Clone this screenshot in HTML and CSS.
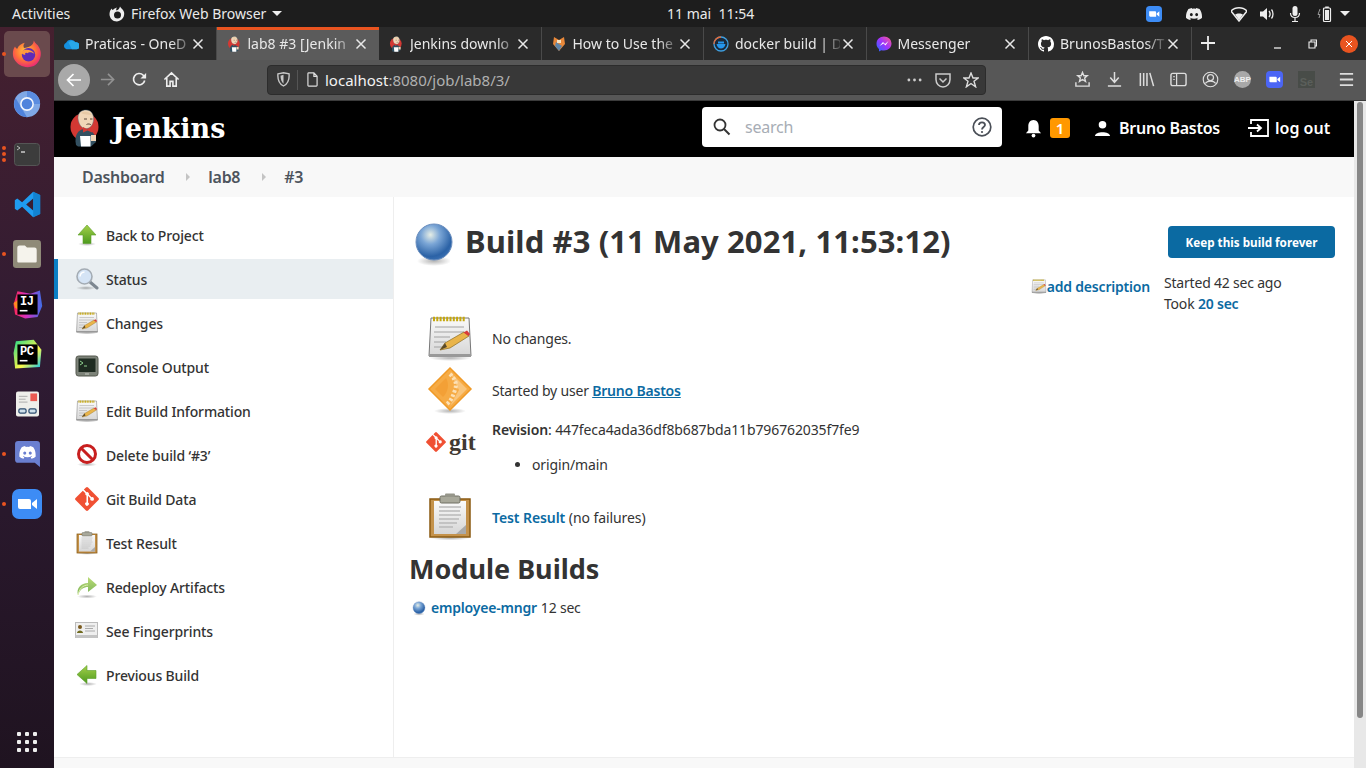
FILE: index.html
```html
<!DOCTYPE html>
<html lang="en">
  <head>
    <meta charset="UTF-8" />
    <title>lab8 #3 [Jenkins]</title>
    <link rel="stylesheet" href="styles.css">
  </head>
  <body>
    <svg class="sprite" aria-hidden="true">
      <defs>
        <radialGradient id="ballFill" cx="40%" cy="30%" r="75%">
          <stop offset="0" stop-color="#e6eee6" />
          <stop offset="0.35" stop-color="#7ba6d6" />
          <stop offset="0.8" stop-color="#2b62a6" />
          <stop offset="1" stop-color="#3c72b4" />
        </radialGradient>
        <radialGradient id="shade">
          <stop offset="0" stop-color="#000" stop-opacity="0.3" />
          <stop offset="1" stop-color="#000" stop-opacity="0" />
        </radialGradient>
        <linearGradient id="greenFill" x1="0" y1="0" x2="0" y2="1">
          <stop offset="0" stop-color="#a4d04a" />
          <stop offset="1" stop-color="#4d9a1f" />
        </linearGradient>
        <linearGradient id="paperFill" x1="0" y1="0" x2="0" y2="1">
          <stop offset="0" stop-color="#fafafa" />
          <stop offset="1" stop-color="#d6d6d6" />
        </linearGradient>
        <radialGradient id="foxFill" cx="45%" cy="40%" r="70%">
          <stop offset="0" stop-color="#ffcb3d" />
          <stop offset="0.5" stop-color="#ff7139" />
          <stop offset="1" stop-color="#e31587" />
        </radialGradient>

        <symbol id="i-ball" viewBox="0 0 48 48">
          <ellipse cx="24" cy="42" rx="17" ry="5" fill="url(#shade)" />
          <circle cx="24" cy="23" r="18" fill="url(#ballFill)" stroke="#6c8fbf" />
        </symbol>
        <symbol id="i-up" viewBox="0 0 24 24">
          <ellipse cx="12" cy="21" rx="9" ry="2" fill="url(#shade)" />
          <path d="M12 2 21 12H16V20.500H8V12H3Z" fill="url(#greenFill)" stroke="#5c9e2a" stroke-width=".6" />
        </symbol>
        <symbol id="i-left" viewBox="0 0 24 24">
          <ellipse cx="13" cy="21" rx="9" ry="2" fill="url(#shade)" />
          <path d="M2 11.500 12 2.500V7.500H21V15.500H12V20.500Z" fill="url(#greenFill)" stroke="#5c9e2a" stroke-width=".6" />
        </symbol>
        <symbol id="i-search" viewBox="0 0 24 24">
          <ellipse cx="11" cy="21" rx="10" ry="2" fill="url(#shade)" />
          <path d="M15 15 22 21" stroke="#7d8790" stroke-width="3" stroke-linecap="round" />
          <circle cx="9.500" cy="9.500" r="7.500" fill="#d5e4f5" stroke="#a4acb4" stroke-width="1.600" />
          <path d="M5 9.500A5 5 0 0 1 9.500 5" fill="none" stroke="#fff" stroke-width="1.500" />
        </symbol>
        <symbol id="i-notepad" viewBox="0 0 48 48">
          <ellipse cx="24" cy="44" rx="21" ry="3" fill="url(#shade)" />
          <path d="M5 4H43L45 42H3Z" fill="url(#paperFill)" stroke="#777" />
          <path d="M3 40H45V43H3Z" fill="#999" />
          <path d="M7 5H40" stroke="#c5a70e" stroke-width="4.500" stroke-dasharray="2 1.300" />
          <path d="M9 13H38M8 18H38M8 23H24M8 28H20M8 33H16" stroke="#a2a2a2" />
          <path d="M14 36 19 29 38 18 43 22 24 34Z" fill="#e9b44a" stroke="#8a6b23" stroke-width=".7" />
          <path d="M14 36 19 29 21 33Z" fill="#5a4a2b" />
          <path d="M37.500 18.500 41 16.500 44 20 42.500 22Z" fill="#d83a3a" />
        </symbol>
        <symbol id="i-terminal" viewBox="0 0 24 24">
          <rect x="1" y="1" width="22" height="20" rx="2.500" fill="#7d8379" stroke="#55594f" />
          <rect x="3.500" y="3.500" width="17" height="13.500" fill="#1e2b21" />
          <path d="M5 6 8 8 5 10M9 11H12" fill="none" stroke="#8fd18f" />
          <path d="M10 19H14" stroke="#c8cbc4" />
        </symbol>
        <symbol id="i-stop" viewBox="0 0 24 24">
          <ellipse cx="12" cy="21.500" rx="10" ry="2" fill="url(#shade)" />
          <circle cx="12" cy="11" r="8.500" fill="#fff" stroke="#c81f1f" stroke-width="3" />
          <path d="M6 5 18 17" stroke="#c81f1f" stroke-width="3" />
        </symbol>
        <symbol id="i-git" viewBox="0 0 92 92">
          <path d="M90 42 50 2A6 6 0 0 0 42 2L34 10 44 20A7 7 0 0 1 53 29L63 39A7 7 0 1 1 59 43L50 34V59A7 7 0 1 1 44 58V33A7 7 0 0 1 40 24L30 14 2 42A6 6 0 0 0 2 50L42 90A6 6 0 0 0 50 90L90 50A6 6 0 0 0 90 42Z" fill="#f05033" />
        </symbol>
        <symbol id="i-clipboard" viewBox="0 0 48 48">
          <ellipse cx="24" cy="45" rx="20" ry="2.500" fill="url(#shade)" />
          <rect x="4" y="6" width="40" height="38" fill="#c4924b" stroke="#8a5a12" stroke-width="1.500" />
          <rect x="8" y="8" width="32" height="33" fill="url(#paperFill)" />
          <path d="M13 14H35M13 18H34M13 22H35M13 26H33M13 30H31M13 34H27" stroke="#b9b9b9" stroke-width="1.300" />
          <path d="M40 41V32L30 41Z" fill="#aaa" />
          <rect x="14" y="3" width="20" height="7" rx="1.500" fill="#a8a89a" stroke="#6f6f62" />
          <rect x="19" y="0.500" width="10" height="3.500" rx="1" fill="#96968a" />
        </symbol>
        <symbol id="i-redeploy" viewBox="0 0 24 24">
          <ellipse cx="12" cy="21.500" rx="10" ry="2" fill="url(#shade)" />
          <path d="M3 20C1 13 6 8 13 8V2L22 10 13 17V12C9 12 5 14 3 20Z" fill="url(#greenFill)" opacity=".75" />
          <path d="M3 20C4 14 8 10 13 10" stroke="#e2efb2" fill="none" />
        </symbol>
        <symbol id="i-card" viewBox="0 0 24 24">
          <rect x="0.500" y="3.500" width="22" height="15" fill="#efefef" stroke="#bbb" />
          <rect x="0.500" y="16" width="22" height="3" fill="#c4c4c4" />
          <circle cx="5" cy="8" r="2" fill="#7a5a1e" />
          <path d="M2 14C2 10.500 8 10.500 8 14Z" fill="#6f6a1e" />
          <path d="M10 7H20M10 9.500H18M10 12H20" stroke="#aaa" />
        </symbol>
        <symbol id="i-user" viewBox="0 0 48 48">
          <ellipse cx="24" cy="45" rx="16" ry="3" fill="url(#shade)" />
          <path d="M24 2 45 23 24 44 3 23Z" fill="#f6ab45" stroke="#f09a26" stroke-width="1.500" />
          <path d="M24 6 41 23 24 40 33 24Z" fill="#f9c57c" />
          <path d="M24 8C30 14 31 18 29 24 27 30 25 35 21 38" fill="none" stroke="#fce0b5" stroke-width="4" stroke-dasharray="2.500 2" />
          <path d="M9 23 20 12C23 17 23 25 17 31Z" fill="#f3a036" />
        </symbol>
        <symbol id="i-jenkins" viewBox="0 0 30 38">
          <circle cx="14.500" cy="18" r="14" fill="#d33833" />
          <path d="M6 36C4 26 8 21 14 20 21 20 26 25 26 33L21 37.500H8Z" fill="#335061" />
          <path d="M8 9C8 3 12 1 16 1 21 1 24 5 23.500 11 23 16 20 20 15.500 19.500 11 19 8.500 15 8 9Z" fill="#f0d6b7" stroke="#49728b" stroke-width=".4" />
          <path d="M11 4C14 2 19 2.500 22 6 18 5.500 14 6 11 4Z" fill="#e7c9a5" />
          <path d="M14 10H17M20 10H22.500M16.500 15.500C18 14.500 20.500 15 21 16" stroke="#49382c" stroke-width=".9" fill="none" />
          <path d="M13 18 17.500 20.500 22 18 22 23.500 17.500 21.500 13 23.500Z" fill="#d33833" />
          <path d="M10 27H20.500V37.500H11Z" fill="#fff" />
          <rect x="21" y="26" width="5" height="6" fill="#f0d6b7" />
        </symbol>
        <symbol id="i-firefox" viewBox="0 0 40 40">
          <path d="M29 2C31 6 34 7 36 11 41 19 38 31 29 36 19 40 8 36 3 27 0 21 1 14 4 10 5 12 6 13 7 13 9 8 13 6 17 5 15 8 15 10 16 12 22 11 29 9 29 2Z" fill="url(#foxFill)" />
          <circle cx="22" cy="21" r="9" fill="#5e2bb8" />
          <path d="M13 16C18 13 27 14 30 20 27 17 22 17 21 19 19 17 16 19 18 21 14 21 12 19 13 16Z" fill="#ff9a3d" />
        </symbol>
        <symbol id="i-code" viewBox="0 0 100 100">
          <path d="M71 3 97 15V85L71 97 30 58 12 72 3 66V34L12 28 30 42ZM71 28 45 50 71 72Z" fill="#1f9cf0" fill-rule="evenodd" />
          <path d="M71 3 97 15V85L71 97Z" fill="#0f7cc8" opacity=".8" />
        </symbol>
        <symbol id="i-discord" viewBox="0 0 24 24">
          <path d="M20.317 4.37a19.79 19.79 0 0 0-4.885-1.515.074.074 0 0 0-.079.037c-.21.375-.444.864-.608 1.25a18.27 18.27 0 0 0-5.487 0 12.64 12.64 0 0 0-.617-1.25.077.077 0 0 0-.079-.037A19.74 19.74 0 0 0 3.677 4.37a.07.07 0 0 0-.032.027C.533 9.046-.32 13.58.099 18.057a.082.082 0 0 0 .031.057 19.9 19.9 0 0 0 5.993 3.03.078.078 0 0 0 .084-.028c.462-.63.874-1.295 1.226-1.994a.076.076 0 0 0-.041-.106 13.1 13.1 0 0 1-1.872-.892.077.077 0 0 1-.008-.128c.126-.094.252-.192.372-.292a.074.074 0 0 1 .077-.01c3.928 1.793 8.18 1.793 12.062 0a.074.074 0 0 1 .078.01c.12.098.246.198.373.292a.077.077 0 0 1-.006.127 12.3 12.3 0 0 1-1.873.892.077.077 0 0 0-.041.107c.36.698.772 1.362 1.225 1.993a.076.076 0 0 0 .084.028 19.84 19.84 0 0 0 6.002-3.03.077.077 0 0 0 .032-.054c.5-5.177-.838-9.674-3.549-13.66a.061.061 0 0 0-.031-.03zM8.02 15.33c-1.183 0-2.157-1.085-2.157-2.419 0-1.333.956-2.419 2.157-2.419 1.21 0 2.176 1.096 2.157 2.42 0 1.333-.956 2.418-2.157 2.418zm7.975 0c-1.183 0-2.157-1.085-2.157-2.419 0-1.333.955-2.419 2.157-2.419 1.21 0 2.176 1.096 2.157 2.42 0 1.333-.946 2.418-2.157 2.418z" fill="currentColor" />
        </symbol>
        <symbol id="i-zoom" viewBox="0 0 30 30">
          <rect width="30" height="30" rx="7" fill="currentColor" />
          <path d="M6 10H17A2 2 0 0 1 19 12V20H8A2 2 0 0 1 6 18ZM20 14 25 10V20L20 16Z" fill="#fff" />
        </symbol>
        <symbol id="i-x" viewBox="0 0 12 12">
          <path d="M1.500 1.500 10.500 10.500M10.500 1.500 1.500 10.500" stroke="currentColor" stroke-width="1.500" />
        </symbol>
        <symbol id="i-github" viewBox="0 0 16 16">
          <path d="M8 0C3.58 0 0 3.58 0 8c0 3.54 2.29 6.53 5.47 7.59.4.07.55-.17.55-.38 0-.19-.01-.82-.01-1.49-2.01.37-2.53-.49-2.69-.94-.09-.23-.48-.94-.82-1.13-.28-.15-.68-.52-.01-.53.63-.01 1.08.58 1.23.82.72 1.21 1.87.87 2.33.66.07-.52.28-.87.51-1.07-1.78-.2-3.64-.89-3.64-3.95 0-.87.31-1.59.82-2.15-.08-.2-.36-1.02.08-2.12 0 0 .67-.21 2.2.82.64-.18 1.32-.27 2-.27.68 0 1.36.09 2 .27 1.53-1.04 2.2-.82 2.2-.82.44 1.1.16 1.92.08 2.12.51.56.82 1.27.82 2.15 0 3.07-1.87 3.75-3.65 3.95.29.25.54.73.54 1.48 0 1.07-.01 1.93-.01 2.2 0 .21.15.46.55.38A8.013 8.013 0 0016 8c0-4.42-3.58-8-8-8z" fill="#fff" />
        </symbol>
      </defs>
    </svg>

    <div class="topbar">
      <span class="activities">Activities</span>
      <span class="app-menu">
        <svg class="app-icon" viewBox="0 0 16 16">
          <path d="M11 0.500C11.500 2 14 3 15 6 16 10 13.500 15 8 15.500 3.500 15.500 .5 12 .5 8 .5 5 2 3 3 2.500 3 3.500 3.500 4 4 4 5 2.500 6.500 2 8 1.500 7 3 7 4 7.500 4.500 9 4 10.500 3 11 .5Z" fill="#eee" />
          <circle cx="8.500" cy="9" r="3.500" fill="#1d1d1d" />
        </svg>
        Firefox Web Browser
        <i class="caret"></i>
      </span>
      <span class="clock">11 mai&nbsp; 11:54</span>
      <span class="tray">
        <svg class="tray-zoom" viewBox="0 0 30 30"><use href="#i-zoom" /></svg>
        <svg class="tray-discord" viewBox="0 0 24 24"><use href="#i-discord" /></svg>
        <svg class="tray-icon tray-wifi" viewBox="0 0 16 16"><path d="M0 5C4 .5 12 .5 16 5L8 15Z" fill="none" stroke="#eee" stroke-width="1.500" /><path d="M4 8.500C6 7 10 7 12 8.500L8 14Z" fill="#eee" /></svg>
        <svg class="tray-icon tray-volume" viewBox="0 0 16 16"><path d="M1 5.500H4L8 2V14L4 10.500H1Z" fill="#eee" /><path d="M10 5C11.500 7 11.500 9 10 11M12.500 3.500C14.500 6 14.500 10 12.500 12.500" fill="none" stroke="#eee" stroke-width="1.300" /></svg>
        <svg class="tray-icon tray-mic" viewBox="0 0 16 16"><rect x="5.500" y="0" width="5" height="10" rx="2.500" fill="#eee" /><path d="M3.500 7C3.500 13 12.500 13 12.500 7M8 12V15.500M5 15.500H11" fill="none" stroke="#eee" stroke-width="1.200" /></svg>
        <svg class="tray-icon tray-battery" viewBox="0 0 16 16"><path d="M3 3 1 8.500H3L2 12" fill="none" stroke="#999" /><rect x="6.500" y="2" width="7" height="13.500" rx="1" fill="none" stroke="#eee" stroke-width="1.200" /><rect x="8.200" y="0.500" width="3.600" height="1.500" fill="#eee" /><rect x="8" y="4" width="4" height="10" fill="#eee" /></svg>
        <i class="caret"></i>
      </span>
    </div>

    <div class="desktop">
      <nav class="dock">
        <div class="dock-item dock-active"><i class="dots dots-one"></i><svg class="dock-icon" viewBox="0 0 40 40"><use href="#i-firefox" /></svg></div>
        <div class="dock-item">
          <svg class="dock-icon" viewBox="0 0 32 32"><circle cx="16" cy="16" r="15" fill="#7fa8e6" /><path d="M16 1A15 15 0 0 1 31 16L24 16 16 8Z" fill="#5b8de0" /><path d="M3 9 16 31A15 15 0 0 1 3 9Z" fill="#4f83dc" /><circle cx="16" cy="16" r="7" fill="#4f83dc" stroke="#f2f6fd" stroke-width="1.800" /></svg>
        </div>
        <div class="dock-item dock-term">
          <i class="dots dots-three"></i>
          <svg class="dock-icon" viewBox="0 0 26 23"><rect x=".5" y=".5" width="25" height="22" rx="3" fill="#3c3c3c" stroke="#555" /><path d="M3 3 6 5 3 7" fill="none" stroke="#bbb" /><path d="M7 9H11" stroke="#eee" stroke-width="1.200" /></svg>
        </div>
        <div class="dock-item dock-code">
          <svg class="dock-icon" viewBox="0 0 100 100"><use href="#i-code" /></svg>
        </div>
        <div class="dock-item dock-files">
          <i class="dots dots-one"></i>
          <svg class="dock-icon" viewBox="0 0 26 26"><rect width="26" height="26" rx="3" fill="#8f8a78" /><path d="M4 7A2 2 0 0 1 6 5H11L13 7H20A2 2 0 0 1 22 9V20A1 1 0 0 1 21 21H5A1 1 0 0 1 4 20Z" fill="#f5f3ec" /></svg>
        </div>
        <div class="dock-item dock-ij">
          <svg class="dock-icon dock-jb" viewBox="0 0 40 40"><defs><linearGradient id="ijFill" x1="0" y1="0" x2="1" y2="0"><stop offset="0" stop-color="#fe2857" /><stop offset="0.45" stop-color="#d531c0" /><stop offset="1" stop-color="#3d6ee8" /></linearGradient></defs><path d="M7 3 24 6 36 2 39 22 33 36 17 38 4 33 2 20Z" fill="url(#ijFill)" /><path d="M2 18 8 14 8 27 4 24Z" fill="#ff8a1f" /><rect x="7" y="7" width="26" height="26" fill="#000" /><rect x="10" y="27" width="10" height="2" fill="#fff" /></svg>
          <span class="jb-label">IJ</span>
        </div>
        <div class="dock-item dock-pc">
          <svg class="dock-icon dock-jb" viewBox="0 0 40 40"><defs><linearGradient id="pcFill" x1="0" y1="0" x2="1" y2="1"><stop offset="0" stop-color="#21d789" /><stop offset="0.6" stop-color="#fcf84a" /><stop offset="1" stop-color="#07c3f2" /></linearGradient></defs><path d="M5 3 28 1 38 14 36 36 4 38 2 18Z" fill="url(#pcFill)" /><rect x="7" y="7" width="26" height="26" fill="#000" /><rect x="10" y="27" width="10" height="2" fill="#fff" /></svg>
          <span class="jb-label">PC</span>
        </div>
        <div class="dock-item dock-reader">
          <svg class="dock-icon" viewBox="0 0 24 26"><rect width="24" height="26" rx="2" fill="#eeeeea" /><path d="M3 5H12M3 8H10M3 11H12" stroke="#aaa" /><rect x="15" y="2" width="7" height="8" fill="#ea5a52" /><rect x="3" y="18" width="7.500" height="4.500" rx="1.500" fill="#cfe0ea" stroke="#2c4c6e" stroke-width="1.300" /><rect x="13.500" y="18" width="7.500" height="4.500" rx="1.500" fill="#cfe0ea" stroke="#2c4c6e" stroke-width="1.300" /></svg>
        </div>
        <div class="dock-item dock-chat">
          <i class="dots dots-one"></i>
          <svg class="dock-icon" viewBox="0 0 24 26"><path d="M3 0H21A3 3 0 0 1 24 3V25L19 21H3A3 3 0 0 1 0 18V3A3 3 0 0 1 3 0Z" fill="#6a7fd0" /><svg x="4" y="3" width="16" height="16" viewBox="0 0 24 24" color="#fff"><use href="#i-discord" /></svg></svg>
        </div>
        <div class="dock-item dock-meet">
          <i class="dots dots-one"></i>
          <svg class="dock-icon" viewBox="0 0 30 30"><use href="#i-zoom" /></svg>
        </div>
        <div class="dock-grid">
          <i></i><i></i><i></i><i></i><i></i><i></i><i></i><i></i><i></i>
        </div>
      </nav>

      <div class="browser">
        <div class="tabs">
          <div class="tab">
            <svg class="favicon" viewBox="0 0 18 12"><path d="M4 12A4 4 0 0 1 3.500 4.500 6 6 0 0 1 14 4 4 4 0 0 1 15 12Z" fill="#1490df" /><path d="M6 4A6 6 0 0 1 14 4 4 4 0 0 1 15 12H10Z" fill="#28a8ea" /></svg>
            <span class="tab-title">Praticas - OneD</span>
            <svg class="tab-close" viewBox="0 0 12 12"><use href="#i-x" /></svg>
          </div>
          <div class="tab tab-active">
            <svg class="favicon" viewBox="0 0 30 38"><use href="#i-jenkins" /></svg>
            <span class="tab-title">lab8 #3 [Jenkin</span>
            <svg class="tab-close" viewBox="0 0 12 12"><use href="#i-x" /></svg>
          </div>
          <div class="tab">
            <svg class="favicon" viewBox="0 0 30 38"><use href="#i-jenkins" /></svg>
            <span class="tab-title">Jenkins downlo</span>
            <svg class="tab-close" viewBox="0 0 12 12"><use href="#i-x" /></svg>
          </div>
          <div class="tab">
            <svg class="favicon" viewBox="0 0 16 16"><path d="M3 1 8 4 13 1 14 8 8 15 2 8Z" fill="#e8883a" /><path d="M5 6 11 10 8 15 4 10Z" fill="#5f86a8" /><path d="M6 4H10V7H6Z" fill="#f6e3c5" /></svg>
            <span class="tab-title">How to Use the</span>
            <svg class="tab-close" viewBox="0 0 12 12"><use href="#i-x" /></svg>
          </div>
          <div class="tab">
            <svg class="favicon" viewBox="0 0 16 16"><circle cx="8" cy="8" r="7" fill="#1b2a3a" stroke="#3f9fe0" stroke-width="1.300" /><path d="M1 8A7 7 0 0 1 8 1" fill="none" stroke="#e96a35" stroke-width="1.300" /><path d="M3.500 8H12.500C12 11 10 12.500 8 12.500 5.500 12.500 4 10.500 3.500 8ZM5 5.500H11V7.500H5Z" fill="#2496ed" /></svg>
            <span class="tab-title">docker build | D</span>
            <svg class="tab-close" viewBox="0 0 12 12"><use href="#i-x" /></svg>
          </div>
          <div class="tab">
            <svg class="favicon" viewBox="0 0 16 16"><defs><linearGradient id="msgFill" x1="0" y1="1" x2="1" y2="0"><stop offset="0" stop-color="#1e6cff" /><stop offset="0.5" stop-color="#a033ff" /><stop offset="1" stop-color="#ff5c87" /></linearGradient></defs><path d="M8 .5C3.800 .5 .5 3.600 .5 7.700 .5 10 1.500 11.800 3 13V15.500L5.300 14.200C6.100 14.400 7 14.600 8 14.600 12.200 14.600 15.500 11.600 15.500 7.600 15.500 3.600 12.200 .5 8 .5Z" fill="url(#msgFill)" /><path d="M3.500 10 7 6 9 8 12.500 5 9.500 9.500 7.500 7.500Z" fill="#fff" /></svg>
            <span class="tab-title">Messenger</span>
            <svg class="tab-close" viewBox="0 0 12 12"><use href="#i-x" /></svg>
          </div>
          <div class="tab">
            <svg class="favicon" viewBox="0 0 16 16"><use href="#i-github" /></svg>
            <span class="tab-title">BrunosBastos/T</span>
            <svg class="tab-close" viewBox="0 0 12 12"><use href="#i-x" /></svg>
          </div>
          <svg class="new-tab" viewBox="0 0 14 14"><path d="M7 0V14M0 7H14" stroke="#eee" stroke-width="1.800" /></svg>
          <div class="window-controls">
            <svg class="win-btn" viewBox="0 0 10 10"><path d="M1 9H8" stroke="#eee" stroke-width="1.300" /></svg>
            <svg class="win-btn" viewBox="0 0 10 10"><path d="M2 3H8V9H2ZM4 3V1H9.500V7H8" fill="none" stroke="#eee" stroke-width="1.100" /></svg>
            <span class="win-close"><svg viewBox="0 0 12 12"><use href="#i-x" /></svg></span>
          </div>
        </div>

        <div class="toolbar">
          <span class="back-btn"><svg viewBox="0 0 18 18"><path d="M16 9H2.500M8.500 3 2.500 9 8.500 15" fill="none" stroke="#fff" stroke-width="1.700" /></svg></span>
          <svg class="tool-icon tool-forward" viewBox="0 0 18 18"><path d="M2 9H15.500M9.500 3 15.500 9 9.500 15" fill="none" stroke="#929292" stroke-width="1.700" /></svg>
          <svg class="tool-icon tool-reload" viewBox="0 0 18 18"><path d="M14.500 10A6 6 0 1 1 13 4.500L15 7" fill="none" stroke="#eee" stroke-width="1.800" /><path d="M16 2V8H10Z" fill="#eee" /></svg>
          <svg class="tool-icon tool-home" viewBox="0 0 18 18"><path d="M1.500 9 9 2 16.500 9M4 7.500V16H7.500V11H10.500V16H14V7.500" fill="none" stroke="#eee" stroke-width="1.700" /></svg>
          <div class="urlbar">
            <svg class="url-shield" viewBox="0 0 14 16"><path d="M1 2 7 .8 13 2C13.500 8 11 13 7 15 3 13 .5 8 1 2Z" fill="none" stroke="#c8c8c8" stroke-width="1.500" /><path d="M7 3V12.500C5 11 3.800 8 3.800 4Z" fill="#c8c8c8" /></svg>
            <i class="url-sep"></i>
            <svg class="url-page" viewBox="0 0 12 16"><path d="M1 1.500A.8 .8 0 0 1 1.800 .8H7.500L11 4.500V14.500A.8 .8 0 0 1 10.200 15.200H1.800A.8 .8 0 0 1 1 14.500ZM7.500 .8V4.500H11" fill="none" stroke="#ddd" stroke-width="1.300" /></svg>
            <span class="url-text"><b>localhost</b>:8080/job/lab8/3/</span>
            <svg class="url-more" viewBox="0 0 16 4"><circle cx="2" cy="2" r="1.500" /><circle cx="8" cy="2" r="1.500" /><circle cx="14" cy="2" r="1.500" /></svg>
            <svg class="url-action" viewBox="0 0 16 16"><path d="M1 2H15V7.500C15 11.500 12 15 8 15S1 11.500 1 7.500ZM4.500 6.500 8 10 11.500 6.500" fill="none" stroke="#ccc" stroke-width="1.500" /></svg>
            <svg class="url-action" viewBox="0 0 16 16"><path d="M8 1 10 6H15.300L11 9.300 12.600 14.800 8 11.500 3.400 14.800 5 9.300 .7 6H6Z" fill="none" stroke="#ddd" stroke-width="1.400" /></svg>
          </div>
          <div class="tool-group">
            <svg class="tool-icon" viewBox="0 0 18 18"><path d="M9 1.500 10.500 5H14L11.300 7.500 12.200 11 9 9 5.800 11 6.700 7.500 4 5H7.500ZM2 12V16H16V12" fill="none" stroke="#ddd" stroke-width="1.500" /></svg>
            <svg class="tool-icon" viewBox="0 0 18 18"><path d="M9 1V11M4.500 7 9 12 13.500 7M2 16H16" fill="none" stroke="#ddd" stroke-width="1.600" /></svg>
            <svg class="tool-icon" viewBox="0 0 18 18"><path d="M2.500 2V16M6 2V16M9.500 2V16M12.500 2 16.500 16" fill="none" stroke="#ddd" stroke-width="1.600" /></svg>
            <svg class="tool-icon" viewBox="0 0 18 18"><rect x="1" y="2.500" width="16" height="13" rx="2" fill="none" stroke="#ddd" stroke-width="1.500" /><path d="M7 2.500V15.500M3.500 6H5M3.500 9H5" stroke="#ddd" stroke-width="1.300" /></svg>
            <svg class="tool-icon" viewBox="0 0 18 18"><circle cx="9" cy="9" r="7.700" fill="none" stroke="#ddd" stroke-width="1.200" /><circle cx="9" cy="7" r="3.200" fill="none" stroke="#ddd" stroke-width="1.300" /><path d="M3.500 13C6 10 12 10 14.500 13" fill="none" stroke="#ddd" stroke-width="1.300" /></svg>
            <span class="abp">ABP</span>
            <svg class="tool-icon" viewBox="0 0 30 30" color="#4b65f5"><use href="#i-zoom" /></svg>
            <span class="selenium">Se</span>
          </div>
          <i class="tool-sep"></i>
          <svg class="tool-icon" viewBox="0 0 18 18"><path d="M2 3H16M2 9H16M2 15H16" stroke="#ddd" stroke-width="2" /></svg>
        </div>

        <div class="viewport">
          <div class="page">
            <header class="jenkins-header">
              <div class="brand">
                <svg class="brand-logo" viewBox="0 0 30 38"><use href="#i-jenkins" /></svg>
                <span class="brand-name">Jenkins</span>
              </div>
              <div class="search-box">
                <svg class="search-glass" viewBox="0 0 18 18"><circle cx="7" cy="7" r="5.500" fill="none" stroke="#333" stroke-width="1.800" /><path d="M11 11 16.500 16.500" stroke="#333" stroke-width="2" /></svg>
                <span class="search-hint">search</span>
                <svg class="search-help" viewBox="0 0 20 20"><circle cx="10" cy="10" r="8.800" fill="none" stroke="#4a4f57" stroke-width="1.700" /><path d="M7 8C7 4.500 13 4.500 13 8 13 10 10 10 10 12.500" fill="none" stroke="#4a4f57" stroke-width="1.800" /><circle cx="10" cy="15" r="1.100" fill="#4a4f57" /></svg>
              </div>
              <div class="notify">
                <svg class="bell" viewBox="0 0 18 20"><path d="M9 1C12.500 1 14.500 4 14.500 7.500V12L17 15H1L3.500 12V7.500C3.500 4 5.500 1 9 1Z" fill="#fff" /><circle cx="9" cy="17.500" r="2" fill="#fff" /></svg>
                <span class="badge">1</span>
              </div>
              <div class="account">
                <svg class="person" viewBox="0 0 18 18"><circle cx="9" cy="5" r="4" fill="#fff" /><path d="M1 17C1 11.500 17 11.500 17 17Z" fill="#fff" /></svg>
                <span>Bruno Bastos</span>
              </div>
              <div class="logout">
                <svg class="logout-icon" viewBox="0 0 22 18"><path d="M4 5V1H21V17H4V13M1 9H14M10 5.500 14 9 10 12.500" fill="none" stroke="#fff" stroke-width="1.800" /></svg>
                <span>log out</span>
              </div>
            </header>

            <div class="breadcrumbs">
              <span>Dashboard</span>
              <i class="crumb-arrow"></i>
              <span>lab8</span>
              <i class="crumb-arrow"></i>
              <span>#3</span>
            </div>

            <div class="layout">
              <aside class="side-panel">
                <a class="task"><svg class="task-icon" viewBox="0 0 24 24"><use href="#i-up" /></svg>Back to Project</a>
                <a class="task task-current"><svg class="task-icon" viewBox="0 0 24 24"><use href="#i-search" /></svg>Status</a>
                <a class="task"><svg class="task-icon" viewBox="0 0 48 48"><use href="#i-notepad" /></svg>Changes</a>
                <a class="task"><svg class="task-icon" viewBox="0 0 24 24"><use href="#i-terminal" /></svg>Console Output</a>
                <a class="task"><svg class="task-icon" viewBox="0 0 48 48"><use href="#i-notepad" /></svg>Edit Build Information</a>
                <a class="task"><svg class="task-icon" viewBox="0 0 24 24"><use href="#i-stop" /></svg>Delete build ‘#3’</a>
                <a class="task"><svg class="task-icon" viewBox="0 0 92 92"><use href="#i-git" /></svg>Git Build Data</a>
                <a class="task"><svg class="task-icon" viewBox="0 0 48 48"><use href="#i-clipboard" /></svg>Test Result</a>
                <a class="task"><svg class="task-icon" viewBox="0 0 24 24"><use href="#i-redeploy" /></svg>Redeploy Artifacts</a>
                <a class="task"><svg class="task-icon" viewBox="0 0 24 24"><use href="#i-card" /></svg>See Fingerprints</a>
                <a class="task"><svg class="task-icon" viewBox="0 0 24 24"><use href="#i-left" /></svg>Previous Build</a>
              </aside>

              <main class="main-panel">
                <div class="build-head">
                  <svg class="build-ball" viewBox="0 0 48 48"><use href="#i-ball" /></svg>
                  <h1>Build #3 (11 May 2021, 11:53:12)</h1>
                  <button class="keep-btn">Keep this build forever</button>
                </div>
                <div class="build-meta">
                  <a class="add-desc"><svg class="add-desc-icon" viewBox="0 0 48 48"><use href="#i-notepad" /></svg>add description</a>
                  <div class="build-times">
                    <div>Started 42 sec ago</div>
                    <div>Took <a class="link">20 sec</a></div>
                  </div>
                </div>
                <div class="summary">
                  <div class="summary-row">
                    <svg class="summary-icon" viewBox="0 0 48 48"><use href="#i-notepad" /></svg>
                    <div>No changes.</div>
                  </div>
                  <div class="summary-row">
                    <svg class="summary-icon" viewBox="0 0 48 48"><use href="#i-user" /></svg>
                    <div>Started by user <a class="link link-user">Bruno Bastos</a></div>
                  </div>
                  <div class="summary-row summary-git">
                    <div class="git-logo"><svg class="git-mark" viewBox="0 0 92 92"><use href="#i-git" /></svg><span>git</span></div>
                    <div class="git-detail">
                      <div><b>Revision</b>: 447feca4ada36df8b687bda11b796762035f7fe9</div>
                      <ul class="branches"><li>origin/main</li></ul>
                    </div>
                  </div>
                  <div class="summary-row summary-test">
                    <svg class="summary-icon" viewBox="0 0 48 48"><use href="#i-clipboard" /></svg>
                    <div><a class="link">Test Result</a> (no failures)</div>
                  </div>
                </div>
                <h2>Module Builds</h2>
                <div class="module">
                  <svg class="module-ball" viewBox="0 0 48 48"><use href="#i-ball" /></svg>
                  <a class="link">employee-mngr</a> 12 sec
                </div>
              </main>
            </div>
            <footer class="page-footer"></footer>
          </div>
          <div class="scrollbar"><i></i></div>
        </div>
      </div>
    </div>
  </body>
</html>
```

FILE: styles.css
```css
* {
  box-sizing: border-box;
}

html,
body {
  margin: 0;
  height: 768px;
  overflow: hidden;
}

body {
  font-family: "Noto Sans", "Open Sans", sans-serif;
  font-size: 14px;
  color: #333;
  background: #000;
}

.sprite {
  display: block;
  width: 0;
  height: 0;
  overflow: hidden;
}

/* ubuntu top bar */
.topbar {
  height: 27px;
  display: flex;
  align-items: center;
  background: #1d1d1d;
  color: #eaeaea;
  font-size: 14px;
  padding-left: 12px;
}

.activities {
  width: 97px;
}

.app-menu {
  width: 558px;
  display: flex;
  align-items: center;
}

.app-icon {
  width: 16px;
  height: 16px;
  margin-right: 6px;
}

.caret {
  display: inline-block;
  width: 0;
  height: 0;
  border-left: 5px solid transparent;
  border-right: 5px solid transparent;
  border-top: 5px solid #eee;
  margin-left: 6px;
}

.clock {
  width: 479px;
}

.tray {
  display: flex;
  align-items: center;
}

.tray-zoom {
  width: 16px;
  height: 18px;
  color: #3d8cf5;
  margin-right: 24px;
}

.tray-discord {
  width: 16px;
  height: 16px;
  color: #eee;
  margin-right: 29px;
}

.tray-icon {
  width: 16px;
  height: 16px;
  margin-right: 12px;
}

.tray-mic {
  margin-right: 14px;
}

.tray-battery {
  margin-right: 1px;
}

.desktop {
  display: flex;
  height: 741px;
}

/* dock */
.dock {
  width: 54px;
  position: relative;
  display: flex;
  flex-direction: column;
  align-items: center;
  background: linear-gradient(#45202f, #2f1b33 45%, #1f1320);
  padding-top: 4px;
}

.dock-item {
  width: 46px;
  height: 46px;
  margin-bottom: 4px;
  display: flex;
  align-items: center;
  justify-content: center;
  position: relative;
  flex-shrink: 0;
}

.dock-active {
  background: #6a4a4d;
  border-radius: 5px;
}

.dock-icon {
  width: 28px;
  height: 28px;
}

.dock-active .dock-icon {
  width: 30px;
  height: 30px;
}

.dock-term .dock-icon {
  width: 26px;
  height: 23px;
}

.dock-code .dock-icon {
  width: 27px;
  height: 27px;
}

.dock-item .dock-jb {
  width: 31px;
  height: 31px;
}

.jb-label {
  position: absolute;
  left: 16px;
  top: 15px;
  color: #fff;
  font: bold 12px/12px "Liberation Mono", monospace;
  letter-spacing: -0.5px;
}

.dock-meet .dock-icon {
  color: #3d8cf5;
  width: 30px;
  height: 30px;
}

.dock-chat .dock-icon {
  width: 25px;
  height: 27px;
}

.dock-reader .dock-icon {
  width: 23px;
  height: 26px;
}

.dots {
  position: absolute;
  left: -2px;
  top: 21px;
  width: 4px;
  height: 4px;
  border-radius: 50%;
  background: #e95420;
}

.dots-three {
  box-shadow: 0 -6px 0 #e95420, 0 6px 0 #e95420;
}

.dock-grid {
  position: absolute;
  left: 17px;
  bottom: 16px;
  width: 20px;
  display: grid;
  grid-template-columns: repeat(3, 4px);
  gap: 4px;
}

.dock-grid i {
  width: 4px;
  height: 4px;
  background: #eee;
  border-radius: 1px;
}

/* firefox */
.browser {
  flex: 1;
  display: flex;
  flex-direction: column;
  min-width: 0;
}

.tabs {
  height: 33px;
  display: flex;
  background: #2a2a2a;
  color: #e8e8e8;
  font-size: 14px;
}

.tab {
  width: 162.500px;
  display: flex;
  align-items: center;
  padding: 0 12px 0 9px;
  border-right: 1px solid #4a4a4a;
  flex-shrink: 0;
}

.tab-active {
  background: #5b5b5b;
  border-top: 3px solid #e95420;
  border-right: 0;
  padding-bottom: 3px;
}

.favicon {
  width: 16px;
  height: 16px;
  margin-right: 6px;
  flex-shrink: 0;
}

.tab-title {
  flex: 1;
  min-width: 0;
  white-space: nowrap;
  -webkit-mask-image: linear-gradient(to right, #000 82%, transparent 104%);
  mask-image: linear-gradient(to right, #000 82%, transparent 104%);
}

.tab-close {
  width: 12px;
  height: 12px;
  margin-left: 2px;
  flex-shrink: 0;
  color: #e8e8e8;
}

.new-tab {
  width: 14px;
  height: 14px;
  margin: 9px 0 0 9px;
}

.window-controls {
  flex: 1;
  display: flex;
  align-items: center;
  justify-content: flex-end;
  padding-right: 8px;
}

.win-btn {
  width: 10px;
  height: 10px;
  margin-right: 24px;
}

.win-close {
  width: 18px;
  height: 18px;
  border-radius: 50%;
  background: #e95420;
  color: #fff;
  display: flex;
  align-items: center;
  justify-content: center;
  margin-left: -1px;
}

.win-close svg {
  width: 8px;
  height: 8px;
}

.toolbar {
  height: 41px;
  background: #575757;
  display: flex;
  align-items: center;
  padding: 0 11px 1px 4px;
  border-bottom: 1px solid #3b3b3b;
}

.back-btn {
  width: 32px;
  height: 32px;
  flex-shrink: 0;
  border-radius: 50%;
  background: #a9a9a9;
  display: flex;
  align-items: center;
  justify-content: center;
  margin-right: 9px;
}

.back-btn svg {
  width: 18px;
  height: 18px;
}

.tool-icon {
  width: 17px;
  height: 17px;
  flex-shrink: 0;
}

.tool-forward {
  margin-right: 15px;
}

.tool-reload {
  margin-right: 15px;
}

.tool-home {
  margin-right: 87px;
}

.urlbar {
  width: 719px;
  height: 30px;
  flex-shrink: 0;
  background: #383838;
  border: 1px solid #2c2c2c;
  border-radius: 4px;
  display: flex;
  align-items: center;
  padding: 0 6px 0 9px;
  font-size: 15px;
  color: #b0b0b0;
}

.url-shield {
  width: 13px;
  height: 15px;
}

.url-sep {
  width: 1px;
  height: 20px;
  background: #555;
  margin: 0 9px 0 7px;
}

.url-page {
  width: 11px;
  height: 15px;
  margin-right: 7px;
}

.url-text {
  flex: 1;
}

.url-text b {
  font-weight: 400;
  color: #f2f2f2;
}

.url-more {
  width: 15px;
  height: 4px;
  fill: #ccc;
  margin-right: 13px;
}

.url-action {
  width: 16px;
  height: 16px;
  margin-right: 6px;
}

.url-action + .url-action {
  margin-left: 6px;
  margin-right: 0;
}

.tool-group {
  display: flex;
  align-items: center;
  gap: 15px;
  margin-left: 88px;
}

.abp {
  width: 17px;
  height: 17px;
  border-radius: 50%;
  background: #a8a8a8;
  color: #eee;
  font: bold 8px/17px "Liberation Sans", sans-serif;
  text-align: center;
}

.selenium {
  width: 17px;
  height: 17px;
  background: #484c48;
  color: #5b5f5b;
  font: bold 11px/22px "Liberation Sans", sans-serif;
  text-align: center;
}

.tool-sep {
  width: 1px;
  height: 32px;
  background: #777;
  margin: 0 12px 0 11px;
}

/* jenkins page */
.viewport {
  flex: 1;
  display: flex;
  min-height: 0;
}

.page {
  flex: 1;
  min-width: 0;
  display: flex;
  flex-direction: column;
  background: #fff;
  letter-spacing: -0.2px;
}

.scrollbar {
  width: 12px;
  background: #e8e8e8;
  padding: 1px 3px 0;
  flex-shrink: 0;
}

.scrollbar i {
  display: block;
  height: 616px;
  background: #878787;
  border-radius: 3px;
}

.jenkins-header {
  height: 56px;
  background: #000;
  color: #fff;
  display: flex;
  align-items: center;
  padding: 0 0 2px 16px;
  font-weight: 600;
  font-size: 16px;
  letter-spacing: -0.25px;
  flex-shrink: 0;
}

.brand {
  width: 632px;
  display: flex;
  align-items: center;
}

.brand-logo {
  width: 30px;
  height: 38px;
}

.brand-name {
  margin-left: 12px;
  font: bold 27px "DejaVu Serif", serif;
  letter-spacing: 0;
}

.search-box {
  width: 300px;
  height: 40px;
  margin-top: -2px;
  background: #fff;
  border-radius: 4px;
  display: flex;
  align-items: center;
  padding: 0 10px 0 11px;
}

.search-glass {
  width: 18px;
  height: 18px;
}

.search-hint {
  flex: 1;
  margin-left: 14px;
  color: #a7adb5;
  font-weight: 400;
}

.search-help {
  width: 20px;
  height: 20px;
}

.notify {
  display: flex;
  align-items: center;
  margin-left: 23px;
}

.bell {
  width: 17px;
  height: 19px;
}

.badge {
  width: 20px;
  height: 20px;
  margin-left: 8px;
  background: #ff9800;
  border-radius: 3px;
  text-align: center;
  line-height: 20px;
  font-size: 15px;
}

.account {
  display: flex;
  align-items: center;
  margin-left: 24px;
}

.person {
  width: 17px;
  height: 17px;
  margin-right: 8px;
}

.logout {
  display: flex;
  align-items: center;
  margin-left: 27px;
  letter-spacing: 0;
}

.logout-icon {
  width: 22px;
  height: 18px;
  margin-right: 6px;
}

.breadcrumbs {
  height: 40px;
  background: #f8f8f8;
  display: flex;
  align-items: center;
  padding-left: 28px;
  font-size: 16px;
  font-weight: 600;
  letter-spacing: -0.3px;
  color: #4d545d;
  flex-shrink: 0;
}

.crumb-arrow {
  width: 0;
  height: 0;
  border-top: 4px solid transparent;
  border-bottom: 4px solid transparent;
  border-left: 4px solid #c4c4c4;
  margin: 0 18px 0 22px;
}

.layout {
  flex: 1;
  display: flex;
  min-height: 0;
}

.side-panel {
  width: 340px;
  flex-shrink: 0;
  padding-top: 18px;
  border-right: 1px solid #eee;
}

.task {
  height: 40px;
  margin-bottom: 4px;
  display: flex;
  align-items: center;
  padding-left: 21px;
  font-weight: 500;
  letter-spacing: -0.15px;
  color: #333;
}

.task-current {
  background: #e9eef1;
  border-left: 4px solid #0b7fc5;
  padding-left: 17px;
}

.task-icon {
  width: 24px;
  height: 24px;
  margin-right: 7px;
}

.main-panel {
  flex: 1;
  min-width: 0;
  padding: 22px 19px 0 16px;
}

.build-head {
  display: flex;
  align-items: center;
  height: 48px;
}

.build-ball {
  width: 48px;
  height: 48px;
  margin-right: 7px;
}

h1 {
  flex: 1;
  margin: -4px 0 0;
  font-size: 31px;
  font-weight: 700;
  letter-spacing: 0.1px;
}

.keep-btn {
  width: 167px;
  height: 32px;
  margin-top: -2px;
  border: none;
  border-radius: 4px;
  background: #0b6aa2;
  color: #fff;
  font: 700 11.7px "Noto Sans", sans-serif;
}

.build-meta {
  display: flex;
  justify-content: flex-end;
  margin-top: 5px;
  height: 43px;
}

.add-desc {
  display: flex;
  align-items: center;
  height: 28px;
  margin-right: 14px;
  color: #0b6aa2;
  font-weight: 600;
}

.add-desc-icon {
  width: 16px;
  height: 17px;
}

.build-times {
  width: 171px;
  line-height: 21px;
}

.link {
  color: #0b6aa2;
  font-weight: 600;
}

.link-user {
  text-decoration: underline;
}

.summary {
  padding-left: 16px;
  margin-top: -1px;
}

.summary-row {
  display: flex;
  align-items: center;
  margin-bottom: 4px;
}

.summary-icon {
  width: 48px;
  height: 48px;
  margin-right: 18px;
  flex-shrink: 0;
}

.summary-row b {
  font-weight: 600;
}

.summary-git {
  align-items: flex-start;
  margin-bottom: 18px;
  line-height: 21px;
}

.git-detail {
  padding-top: 1px;
  letter-spacing: -0.12px;
}

.summary-test {
  letter-spacing: -0.08px;
}

.git-logo {
  width: 48px;
  height: 48px;
  margin-right: 18px;
  display: flex;
  align-items: center;
  font: bold 24px "Liberation Serif", serif;
  letter-spacing: 0;
  color: #413932;
  flex-shrink: 0;
}

.git-mark {
  width: 20px;
  height: 20px;
  margin-right: 3px;
  flex-shrink: 0;
}

.branches {
  margin: 14px 0 0;
  padding-left: 40px;
}

h2 {
  margin: 10px 0 10px -1px;
  font-size: 27px;
  line-height: 36px;
  font-weight: 700;
  letter-spacing: 0;
}

.module {
  display: flex;
  align-items: center;
  gap: 4px;
  line-height: 21px;
}

.module-ball {
  width: 16px;
  height: 16px;
  margin-left: 1px;
}

.page-footer {
  height: 11px;
  background: #f8f8f8;
  border-top: 1px solid #eee;
  flex-shrink: 0;
}
```
